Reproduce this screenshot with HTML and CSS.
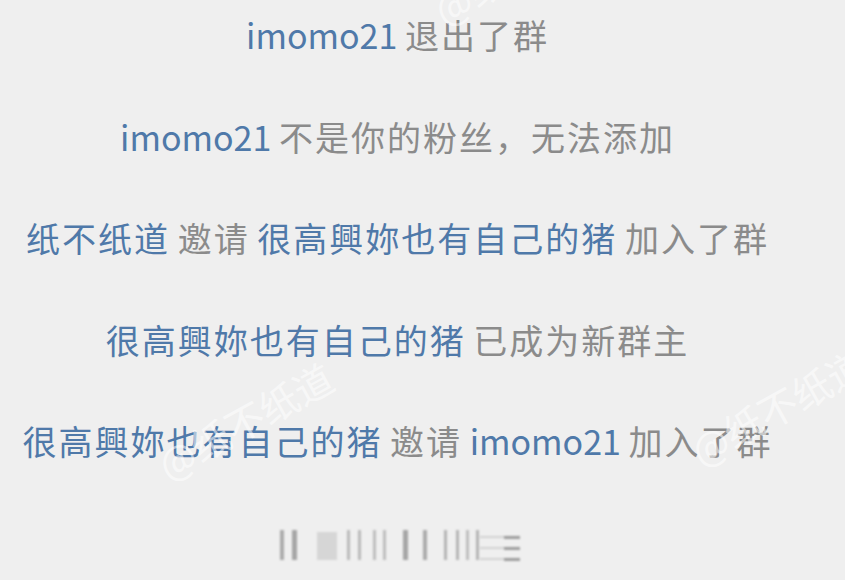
FILE: index.html
```html
<!DOCTYPE html>
<html lang="zh">
<head>
<meta charset="utf-8">
<link rel="stylesheet" href="styles.css">
</head>
<body>
<div class="page">
  <div class="feed">
    <p class="line"><span class="name">imomo21</span> <span class="sys cjk">退出了群</span></p>
    <p class="line"><span class="name">imomo21</span> <span class="sys cjk">不是你的粉丝，无法添加</span></p>
    <p class="line"><span class="name cjk">纸不纸道</span> <span class="sys cjk">邀请</span> <span class="name cjk">很高興妳也有自己的猪</span> <span class="sys cjk">加入了群</span></p>
    <p class="line"><span class="name cjk">很高興妳也有自己的猪</span> <span class="sys cjk">已成为新群主</span></p>
    <p class="line"><span class="name cjk">很高興妳也有自己的猪</span> <span class="sys cjk">邀请</span> <span class="name">imomo21</span> <span class="sys cjk">加入了群</span></p>
  </div>
  <svg class="blurbar" width="260" height="44" viewBox="0 0 260 44">
    <defs><filter id="b"><feGaussianBlur stdDeviation="1.2"/></filter></defs>
    <g filter="url(#b)" fill="#8e8e8e">
      <rect x="18" y="6" width="4" height="30" opacity="0.7"/>
      <rect x="30" y="6" width="5" height="30" opacity="0.75"/>
      <rect x="55" y="8" width="20" height="28" fill="#d6d6d6"/>
      <rect x="85" y="6" width="3" height="30" opacity="0.55"/>
      <rect x="96" y="6" width="3" height="30" opacity="0.55"/>
      <rect x="111" y="6" width="3" height="30" opacity="0.5"/>
      <rect x="121" y="6" width="3" height="30" opacity="0.5"/>
      <rect x="141" y="6" width="5" height="30" opacity="0.75"/>
      <rect x="161" y="6" width="4" height="30" opacity="0.7"/>
      <rect x="182" y="6" width="3" height="30" opacity="0.6"/>
      <rect x="194" y="6" width="3" height="30" opacity="0.6"/>
      <rect x="204" y="6" width="3" height="30" opacity="0.5"/>
      <rect x="214" y="6" width="3" height="30" opacity="0.6"/>
      <rect x="218" y="12" width="40" height="2" opacity="0.3"/>
      <rect x="218" y="23" width="40" height="2" opacity="0.3"/>
      <rect x="218" y="34" width="40" height="2" opacity="0.3"/>
      <rect x="242" y="12" width="16" height="3" opacity="0.8"/>
      <rect x="242" y="23" width="16" height="3" opacity="0.8"/>
      <rect x="242" y="34" width="16" height="3" opacity="0.8"/>
    </g>
  </svg>
  <span class="mark mark-top">@纸不纸道</span>
  <span class="mark mark-mid">@纸不纸道</span>
  <span class="mark mark-right">@纸不纸道</span>
</div>
</body>
</html>
```
FILE: styles.css
```css
html, body {
  margin: 0;
  padding: 0;
  background: #efefef;
}
.page {
  position: relative;
  width: 845px;
  height: 580px;
  overflow: hidden;
  font-family: "Noto Sans CJK SC", "Noto Sans", sans-serif;
}
.feed {
  display: flex;
  flex-direction: column;
  align-items: center;
  padding-top: 15px;
  padding-right: 50px;
  gap: 61.6px;
}
.line {
  margin: 0;
  height: 40px;
  line-height: 40px;
  font-size: 34px;
  white-space: nowrap;
}
.cjk { letter-spacing: 2px; }
.name { color: #4f79a9; }
.sys { color: #8b8b8b; }
.blurbar {
  position: absolute;
  left: 262px;
  top: 524px;
}
.mark {
  position: absolute;
  font-size: 39px;
  line-height: 39px;
  height: 39px;
  color: rgba(255, 255, 255, 0.55);
  transform: rotate(-29deg);
  transform-origin: left bottom;
  white-space: nowrap;
  z-index: 1;
}
.mark-top { left: 446px; top: -10px; }
.mark-mid { left: 170px; top: 445px; }
.mark-right { left: 703px; top: 431px; }
```
